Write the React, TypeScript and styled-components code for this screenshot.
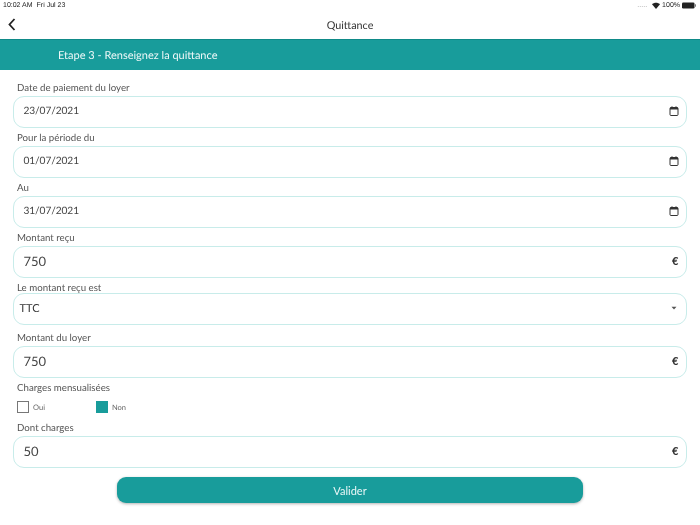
import React from "react";
import styled, { createGlobalStyle } from "styled-components";

const Global = createGlobalStyle`
  html, body { margin: 0; padding: 0; background: #fff; }
  body { font-family: "Lato", "Noto Sans", sans-serif; color: #333; text-rendering: geometricPrecision; }
`;
const Page = styled.div`
  width: 700px; height: 525px; overflow: hidden; display: flex; flex-direction: column; background: #fff; will-change: transform;
`;
const StatusBar = styled.div`
  height: 11px; padding: 0 4px 0 3px; display: flex; align-items: center; justify-content: space-between;
  font-family: "Liberation Sans", sans-serif; font-size: 7px; color: #222;
`;
const StatusGroup = styled.div<{ $gap: number }>`
  display: flex; align-items: center; gap: ${(p) => p.$gap}px;
`;
const Dots = styled.span`color: #999; margin-right: 3px;`;
const Header = styled.div`
  height: 28px; position: relative; display: flex; align-items: center; justify-content: center;
  font-size: 10.8px; color: #333;
`;
const Back = styled.svg`
  position: absolute; left: 8px; top: 7px; width: 8px; height: 13px;
`;
const Band = styled.div`
  height: 30px; background: #189c9b; border-top: 1px solid #0f8a88; display: flex; align-items: center;
  padding-left: 58px; color: #eef8f8; font-size: 11px;
`;
const Form = styled.div`
  padding: 11px 13px 0; display: flex; flex-direction: column;
`;
const Label = styled.div<{ $h?: number }>`
  height: ${(p) => p.$h ?? 15}px; line-height: 15px; padding-left: 4px; font-size: 9.7px; color: #555;
`;
const Field = styled.div<{ $mb?: number }>`
  height: 31.5px; box-sizing: border-box; border: 1.5px solid #c8ecea; border-radius: 11px; margin-bottom: ${(p) => p.$mb ?? 3.5}px;
  display: flex; align-items: center; justify-content: space-between; padding: 0 7.5px 1px 9.5px; background: #fff;
`;
const DateText = styled.span`font-size: 10.2px; color: #444; letter-spacing: -0.1px;`;
const AmountText = styled.span`font-size: 13px; color: #444;`;
const SelectText = styled.span`font-size: 11px; color: #333; margin-left: -4px;`;
const Euro = styled.span`font-size: 11px; font-weight: 900; color: #333;`;
const Checks = styled.div`
  display: flex; align-items: center; height: 18px; padding-left: 4px; margin: 4px 0 5px;
`;
const Check = styled.div`display: flex; align-items: center; gap: 4px; width: 79px; font-size: 7.5px; color: #666;`;
const Box = styled.div<{ $on?: boolean }>`
  width: 12px; height: 12px; box-sizing: border-box;
  border: ${(p) => (p.$on ? "0" : "1.5px solid #777")}; background: ${(p) => (p.$on ? "#189c9b" : "#fff")};
`;
const Submit = styled.button`
  align-self: center; width: 466px; height: 26px; margin-top: 6px; border: 0; border-radius: 9px; background: #189c9b; color: #eaf7f7;
  font-family: inherit; font-size: 11px; box-shadow: 0 1px 3px rgba(0,0,0,.3);
`;

const Calendar = () => (
  <svg width="10" height="10" viewBox="0 0 10 10">
    <rect x="1" y="1.5" width="8" height="8" rx="1" fill="none" stroke="#333" strokeWidth="1" />
    <rect x="1" y="1.5" width="8" height="2" fill="#333" />
    <rect x="2.5" y="0.3" width="1" height="1.5" fill="#333" />
    <rect x="6.5" y="0.3" width="1" height="1.5" fill="#333" />
  </svg>
);
const Wifi = () => (
  <svg width="8" height="7" viewBox="0 0 8 7">
    <path d="M0 2.2C2.3 .2 5.7 .2 8 2.2L4 7Z" fill="#222" />
  </svg>
);
const Battery = () => (
  <svg width="14" height="7" viewBox="0 0 14 7">
    <rect x="0" y="0.5" width="12.5" height="6" rx="1.3" fill="#222" />
    <rect x="13" y="2.3" width="1" height="2.4" fill="#777" />
  </svg>
);

const dates = [
  ["Date de paiement du loyer", "23/07/2021"],
  ["Pour la période du", "01/07/2021"],
  ["Au", "31/07/2021"],
];

export default function App() {
  return (
    <Page>
      <Global />
      <StatusBar>
        <StatusGroup $gap={4}><span>10:02 AM</span><span>Fri Jul 23</span></StatusGroup>
        <StatusGroup $gap={2}><Dots>.....</Dots><Wifi /><span>100%</span><Battery /></StatusGroup>
      </StatusBar>
      <Header>
        <Back viewBox="0 0 8 13"><path d="M6.5 1 1.5 6.5l5 5.5" fill="none" stroke="#222" strokeWidth="1.8" /></Back>
        Quittance
      </Header>
      <Band>Etape 3 - Renseignez la quittance</Band>
      <Form>
        {dates.map(([l, v]) => (
          <React.Fragment key={l}>
            <Label>{l}</Label>
            <Field><DateText>{v}</DateText><Calendar /></Field>
          </React.Fragment>
        ))}
        <Label>Montant reçu</Label>
        <Field><AmountText>750</AmountText><Euro>€</Euro></Field>
        <Label $h={12}>Le montant reçu est</Label>
        <Field $mb={6.5}>
          <SelectText>TTC</SelectText>
          <svg width="10" height="4" viewBox="0 0 10 4"><path d="M2.5 .8h5L5 3.6Z" fill="#555" /></svg>
        </Field>
        <Label>Montant du loyer</Label>
        <Field><AmountText>750</AmountText><Euro>€</Euro></Field>
        <Label $h={13}>Charges mensualisées</Label>
        <Checks>
          <Check><Box />Oui</Check>
          <Check><Box $on />Non</Check>
        </Checks>
        <Label>Dont charges</Label>
        <Field><AmountText>50</AmountText><Euro>€</Euro></Field>
        <Submit>Valider</Submit>
      </Form>
    </Page>
  );
}
